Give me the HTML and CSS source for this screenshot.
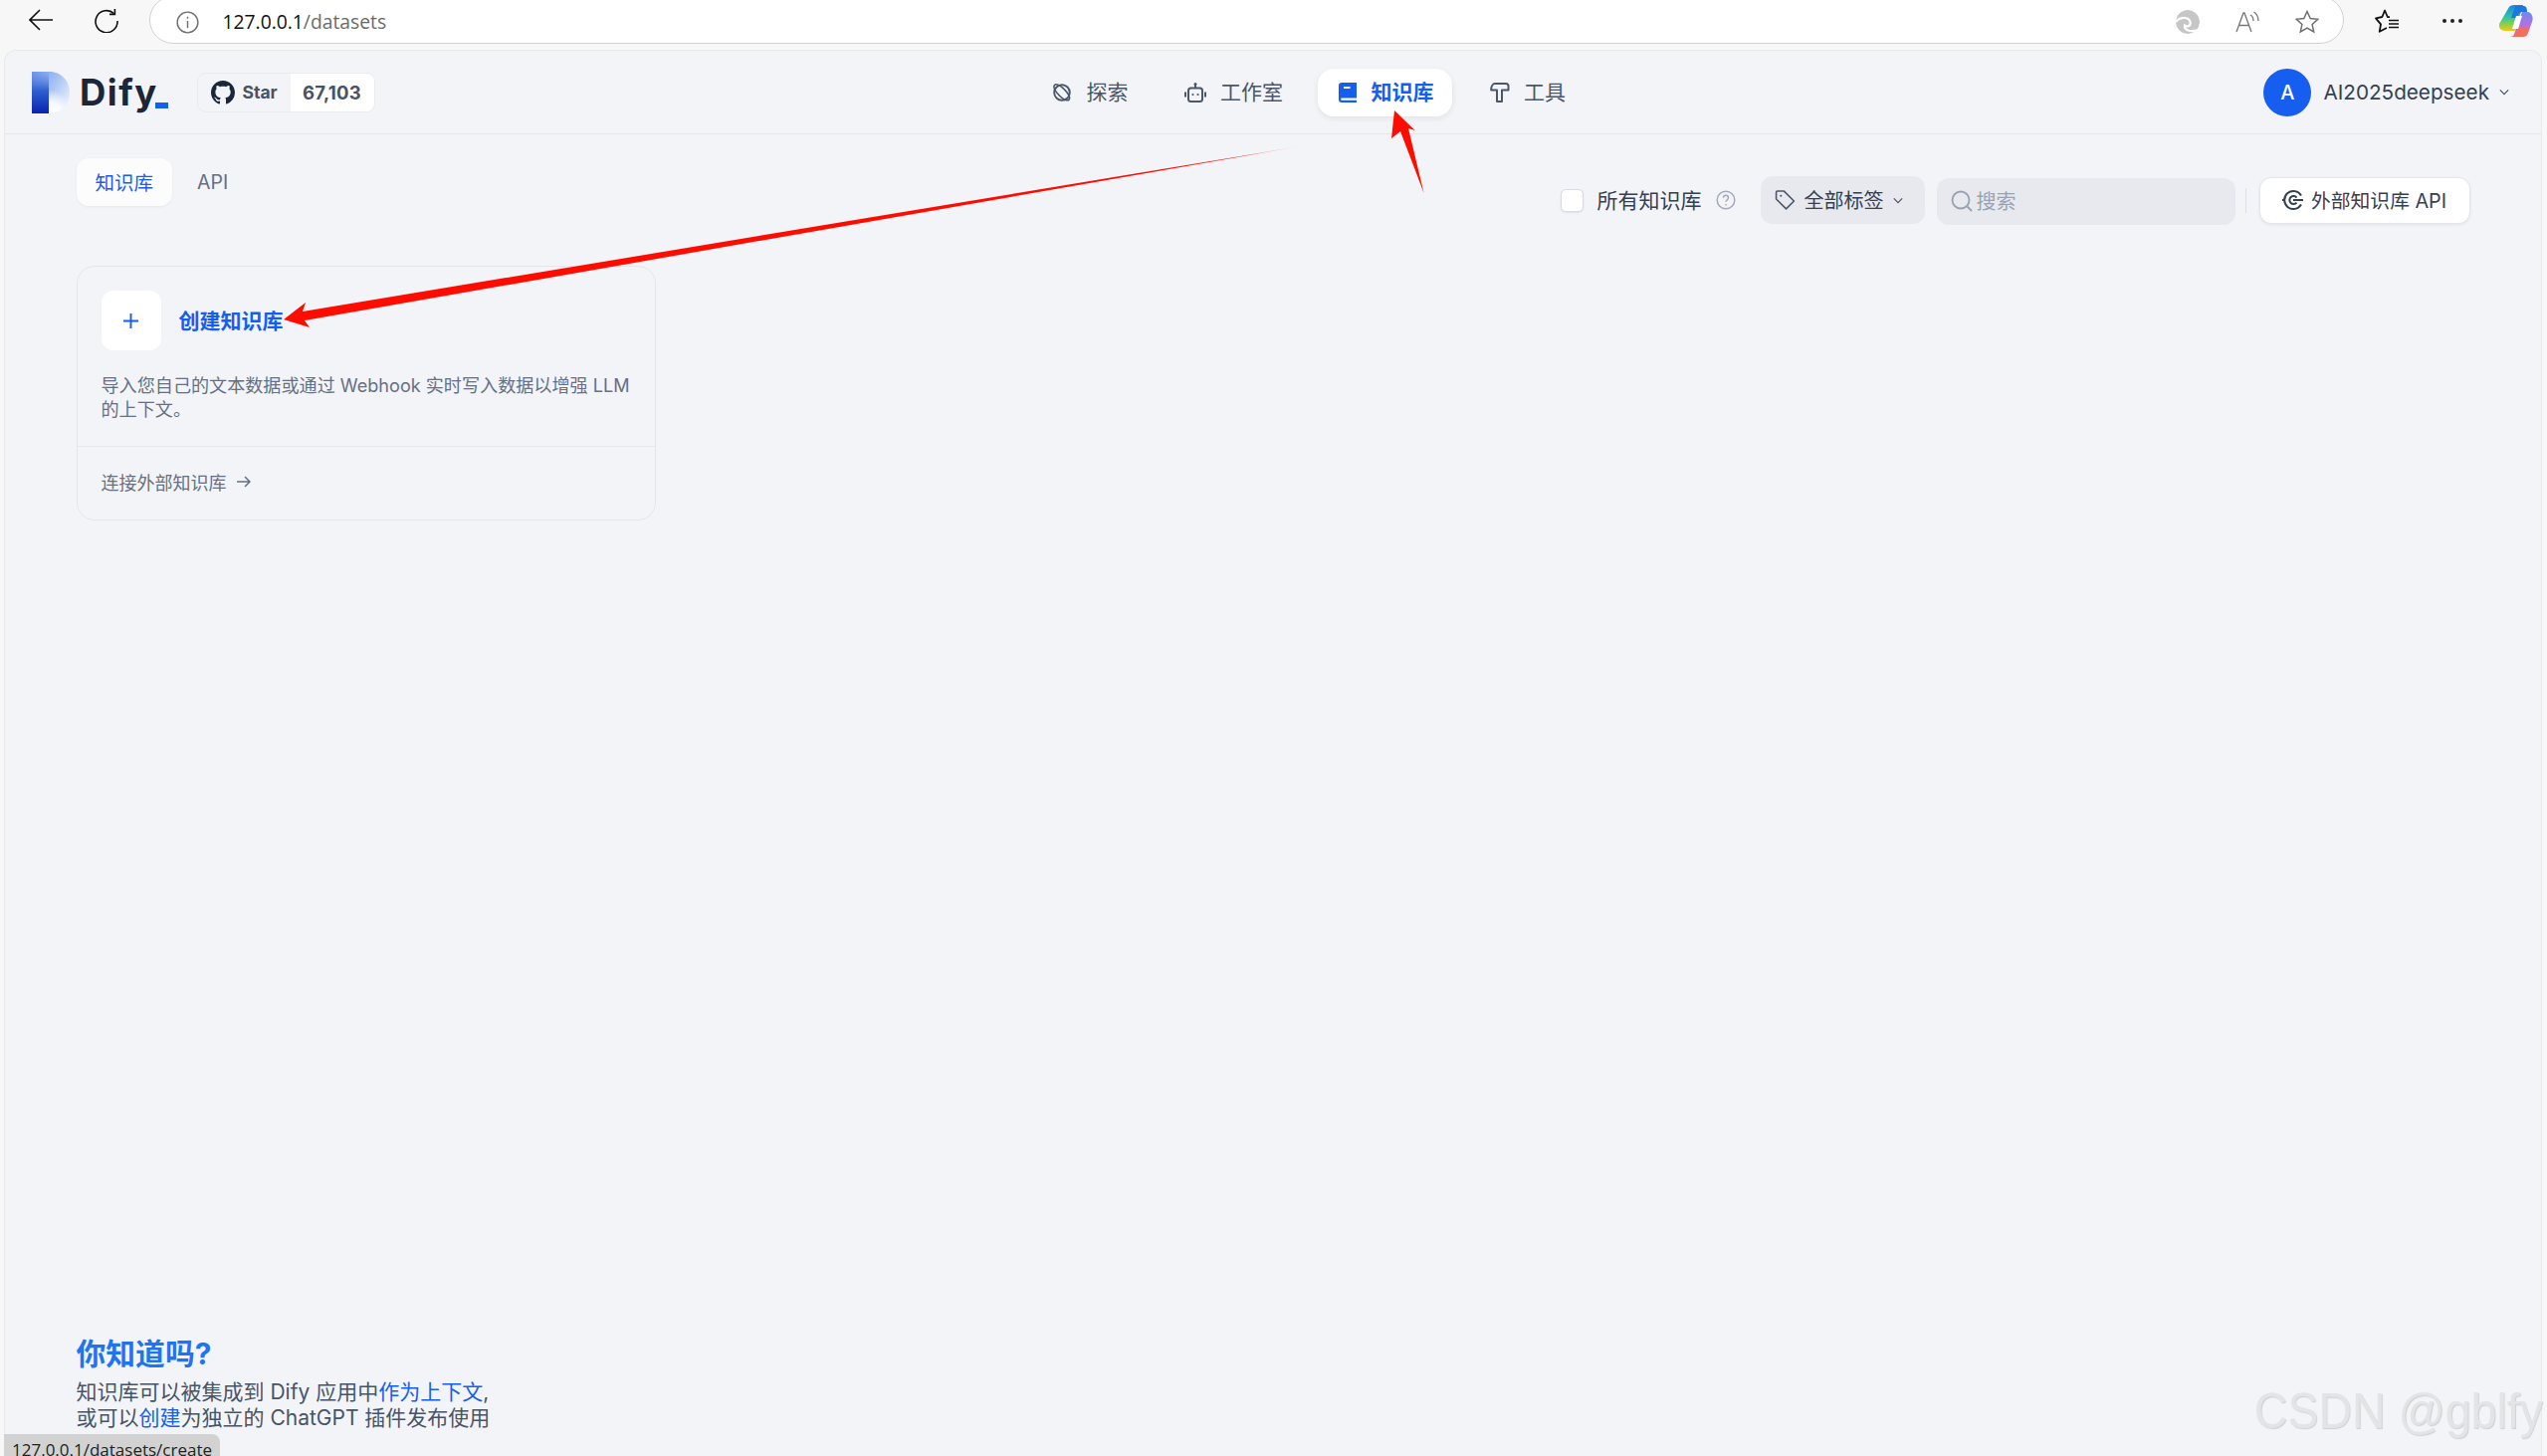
FILE: index.html
```html
<!DOCTYPE html>
<html lang="zh-CN">
<head>
<meta charset="utf-8">
<title>知识库 - Dify</title>
<link rel="stylesheet" href="styles.css">
</head>
<body>
<div class="chrome">
  <svg class="chrome-back" viewBox="0 0 24 22" fill="none" stroke="#111" stroke-width="1.6"><path d="M24 11H1M11 1 1 11l10 10"/></svg>
  <svg class="chrome-reload" viewBox="0 0 24 24" fill="none" stroke="#111" stroke-width="1.6"><path d="M19.5 4.6A11 11 0 1 0 23 12"/><path d="M20.4 0v5.4H15"/></svg>
  <div class="urlbar">
    <svg class="url-info" viewBox="0 0 24 24" fill="none" stroke="#6f6f6f" stroke-width="1.5"><circle cx="12" cy="12" r="10.8"/><path d="M12 10.5V18M12 6v2"/></svg>
    <div class="url-text"><span class="url-host">127.0.0.1</span>/datasets</div>
    <div class="url-actions">
      <svg class="ua-swirl" viewBox="0 0 24 24"><circle cx="12" cy="12" r="12" fill="#c6c6c6"/><path d="M0 12C5 6 13 7 14.500 12c1 4-3 5.500-5.500 3.500-1 4 5 8 15 4" fill="none" stroke="#fff" stroke-width="2.200"/></svg>
      <svg class="ua-read" viewBox="0 0 24 24" fill="none" stroke="#777" stroke-width="1.3"><path d="M1 22 8 3h1l7 19M3.6 15.5H14"/><path d="M15 5c2 1 3 3 3 6M18.500 2c3 2 4.500 5 4.500 9"/></svg>
      <svg class="ua-star" viewBox="0 0 24 24" fill="none" stroke="#6f6f6f" stroke-width="1.5"><path d="m12 1.500 3.200 7 7.600.8-5.700 5.100 1.600 7.500-6.700-3.800-6.700 3.800 1.600-7.500-5.700-5.100 7.600-.8z"/></svg>
    </div>
  </div>
  <svg class="chrome-fav" viewBox="0 0 24 24" fill="none" stroke="#111" stroke-width="1.8" stroke-linejoin="round"><path d="M15 8.200 12.800 8 10 1.500 7.400 8 1 9.300l5 6-1.300 7.500 7.300-3.800"/><path d="M14 11.500h10M14 15h10M14 18.500h10" stroke-width="1.500"/></svg>
  <div class="chrome-dots"><i></i><i></i><i></i></div>
  <svg class="chrome-copilot" viewBox="0 0 34 32">
    <defs>
      <linearGradient id="cpA" x1="0" y1="0" x2="0" y2="1"><stop offset="0" stop-color="#1a86e0"/><stop offset=".45" stop-color="#2fc2a8"/><stop offset=".8" stop-color="#9fd03a"/><stop offset="1" stop-color="#f7c61a"/></linearGradient>
      <linearGradient id="cpB" x1="0" y1="0" x2="0" y2="1"><stop offset="0" stop-color="#6a8cf0"/><stop offset=".6" stop-color="#c06cdc"/><stop offset="1" stop-color="#e868a8"/></linearGradient>
    </defs>
    <path d="M10 2C11 .700 13 0 15 0h9l-8 26H6c-4 0-7-3-6-7z" fill="url(#cpA)"/>
    <path d="M24 32c2 0 4-1 5-4l4-11c2-5-1-10-5-10h-5l-9 25z" fill="url(#cpB)"/>
    <path d="M11 32h12c3 0 5-2 6-5l1-4H19c-1 5-3 8-8 9z" fill="#f2705a"/>
    <path d="M16 1h9c2 0 3 2 3 6h-5c-2 0-4 2-4 4l-1 2h-6z" fill="#1c78e0"/>
    <path d="M17 11h6l-4 13h-6z" fill="#fff"/>
  </svg>
</div>

<div class="panel">
  <header class="topbar">
    <div class="brand">
      <svg class="logo-mark" viewBox="0 0 38 42">
        <defs>
          <linearGradient id="lgA" x1="0" y1="0" x2="1" y2=".7"><stop offset="0" stop-color="#6f96ec"/><stop offset=".55" stop-color="#a9c4f4"/><stop offset="1" stop-color="#e6eefb"/></linearGradient>
          <linearGradient id="lgB" x1="0" y1="0" x2="0" y2="1"><stop offset="0" stop-color="#3f6fd8" stop-opacity="0"/><stop offset=".45" stop-color="#2f5fd0"/><stop offset="1" stop-color="#0a22b0"/></linearGradient>
          <radialGradient id="lgC" gradientUnits="userSpaceOnUse" cx="17" cy="42" r="24"><stop offset="0" stop-color="#fff"/><stop offset=".5" stop-color="#fff" stop-opacity=".85"/><stop offset="1" stop-color="#fff" stop-opacity="0"/></radialGradient>
        </defs>
        <path d="M0 0h18c11 0 20 9 20 21s-9 21-20 21H0z" fill="url(#lgA)"/>
        <path d="M0 0h17v42H0z" fill="url(#lgB)"/>
        <path d="M17 18h21v3c0 12-9 21-20 21h-1z" fill="url(#lgC)"/>
      </svg>
      <div class="logo-word">Dify<span class="logo-dash"></span></div>
      <div class="star-badge">
        <div class="star-left">
          <svg class="gh-icon" viewBox="0 0 16 16"><path fill="#1c2639" d="M8 0C3.580 0 0 3.580 0 8c0 3.540 2.290 6.530 5.470 7.590.4.070.55-.17.55-.38 0-.19-.01-.82-.01-1.490-2.010.37-2.530-.49-2.690-.94-.09-.23-.48-.94-.82-1.130-.28-.15-.68-.52-.01-.53.63-.01 1.080.58 1.230.82.720 1.210 1.870.870 2.330.660.070-.520.280-.870.510-1.070-1.780-.2-3.640-.89-3.640-3.950 0-.870.310-1.590.820-2.150-.080-.2-.360-1.020.080-2.120 0 0 .670-.210 2.200.820.640-.180 1.320-.270 2-.270s1.360.090 2 .270c1.530-1.040 2.200-.820 2.200-.820.440 1.100.160 1.920.080 2.120.510.560.820 1.270.820 2.150 0 3.070-1.870 3.750-3.650 3.950.290.250.540.730.540 1.480 0 1.070-.010 1.930-.010 2.200 0 .210.150.460.550.380A8.013 8.013 0 0 0 16 8c0-4.420-3.580-8-8-8z"/></svg>
          <span class="star-label">Star</span>
        </div>
        <div class="star-count">67,103</div>
      </div>
    </div>
    <nav class="nav">
      <a class="nav-item">
        <svg class="nav-icon icon-explore" viewBox="0 0 20 20" fill="none" stroke="#4b5768" stroke-width="1.900"><circle cx="10" cy="10" r="7.800"/><path d="M2.500 2.500c1.500-1.500 4.500-.3 8 2.700s6.300 7 7 9.500c.5 2-.8 3.500-2.800 3-2.500-.6-6.200-3.200-8.700-6.200S1 4 2.500 2.500z" stroke-width="1.600"/></svg>
        <span>探索</span>
      </a>
      <a class="nav-item">
        <svg class="nav-icon icon-robot" viewBox="0 0 22 20" fill="none" stroke="#4b5768" stroke-width="2"><rect x="4" y="5.500" width="14" height="13.500" rx="2.500"/><path d="M11 1.500v4M1 9.500v5M21 9.500v5"/><circle cx="11" cy="1.500" r="1.500" fill="#4b5768" stroke="none"/><circle cx="8.500" cy="12" r="1.100" fill="#4b5768" stroke="none"/><circle cx="13.500" cy="12" r="1.100" fill="#4b5768" stroke="none"/></svg>
        <span>工作室</span>
      </a>
      <a class="nav-item nav-item-active">
        <svg class="nav-icon icon-book" viewBox="0 0 18 20"><path fill="#155eef" d="M3 0h15v15.500H3.500c-1 0-1.300.6-1.300 1.200s.3 1.100 1.300 1.100H18V20H3c-2 0-3-1.200-3-3V3c0-2 1-3 3-3z"/><rect x="5" y="4" width="6.500" height="2" fill="#fff"/></svg>
        <span>知识库</span>
      </a>
      <a class="nav-item">
        <svg class="nav-icon icon-tool" viewBox="0 0 20 20" fill="none" stroke="#4b5768" stroke-width="2" stroke-linejoin="round"><path d="M7 7.500V19h5V7.500h6.500v-4C18.500 2 17.500 1 16 1H5C3 1 1.200 3.500 1.200 7.500z"/></svg>
        <span>工具</span>
      </a>
    </nav>
    <div class="account">
      <div class="avatar">A</div>
      <span class="account-name">AI2025deepseek</span>
      <svg class="chev-sm chev-account" viewBox="0 0 12 8" fill="none" stroke="#4b5768" stroke-width="1.500"><path d="m1 1.500 5 5 5-5"/></svg>
    </div>
  </header>

  <main class="content">
    <div class="toolbar">
      <div class="tabs">
        <div class="tab tab-active">知识库</div>
        <div class="tab">API</div>
      </div>
      <div class="filters">
        <label class="all-check"><span class="checkbox"></span><span>所有知识库</span>
          <svg class="help" viewBox="0 0 20 20" fill="none" stroke="#a3abb8" stroke-width="1.500"><circle cx="10" cy="10" r="8.800"/><path d="M7.500 7.800c0-3.300 5-3.300 5 0 0 2-2.500 2-2.500 4"/><path d="M10 14v1.500"/></svg>
        </label>
        <div class="tag-select">
          <svg class="tag-icon" viewBox="0 0 20 20" fill="none" stroke="#4b5768" stroke-width="1.500" stroke-linejoin="round"><path d="M1.500 2.500c0-.6.400-1 1-1h6.500l9.500 9.500-7.500 7.500-9.500-9.500z"/><circle cx="6" cy="6" r="1" fill="#4b5768" stroke="none"/></svg>
          <span>全部标签</span>
          <svg class="chev-sm" viewBox="0 0 12 8" fill="none" stroke="#4b5768" stroke-width="1.500"><path d="m1 1.500 5 5 5-5"/></svg>
        </div>
        <div class="search">
          <svg class="search-icon" viewBox="0 0 22 22" fill="none" stroke="#98a2b2" stroke-width="1.800"><circle cx="10" cy="10" r="8.500"/><path d="m16.500 16.500 4.500 4.500"/></svg>
          <span>搜索</span>
        </div>
        <div class="vdivider"></div>
        <div class="api-button">
          <svg class="api-icon" viewBox="0 0 22 22" fill="none" stroke="#354052" stroke-width="2"><path d="M19 6.500A9 9 0 1 0 19 15.500"/><path d="M14.500 8.500a4 4 0 1 0 0 5"/><path d="M0 11h3M11 11h10"/></svg>
          <span>外部知识库 API</span>
        </div>
      </div>
    </div>

    <section class="card">
      <div class="card-top">
        <div class="card-head">
          <div class="plus-box">
            <svg class="plus-icon" viewBox="0 0 14 14" fill="none" stroke="#155eef" stroke-width="1.800"><path d="M7 0v14M0 7h14"/></svg>
          </div>
          <div class="card-title">创建知识库</div>
        </div>
        <p class="card-desc">导入您自己的文本数据或通过 Webhook 实时写入数据以增强 LLM 的上下文。</p>
      </div>
      <div class="card-foot">
        <span>连接外部知识库</span>
        <svg class="arrow-right" viewBox="0 0 14 12" fill="none" stroke="#676f83" stroke-width="1.500"><path d="M0 6h13M8 1l5 5-5 5"/></svg>
      </div>
    </section>

    <section class="tip">
      <h2 class="tip-title">你知道吗?</h2>
      <p class="tip-text">知识库可以被集成到 Dify 应用中<a class="tip-link">作为上下文</a>,<br>或可以<a class="tip-link">创建</a>为独立的 ChatGPT 插件发布使用</p>
    </section>
  </main>
</div>

<svg class="annotations" viewBox="0 0 2559 1463">
  <defs>
    <linearGradient id="fade" gradientUnits="userSpaceOnUse" x1="1306" y1="147" x2="1180" y2="170"><stop offset="0" stop-color="#ff0c00" stop-opacity=".3"/><stop offset=".4" stop-color="#ff0c00" stop-opacity=".85"/><stop offset="1" stop-color="#ff0c00"/></linearGradient>
  </defs>
  <polygon points="285,321 307,304 304,313 1306,147 306,322 311,329" fill="url(#fade)"/>
  <polygon points="1401,111 1421.600,131 1415,129 1430.600,194 1407,132 1398,139" fill="#ff0c00"/>
</svg>
<div class="watermark">CSDN @gblfy</div>
<div class="status">127.0.0.1/datasets/create</div>
</body>
</html>
```

FILE: styles.css
```css
* { box-sizing: border-box; }
html, body { height: 100%; }
body {
  margin: 0;
  background: #f7f7f7;
  display: flex;
  flex-direction: column;
  font-family: Inter, "Noto Sans CJK SC", sans-serif;
  font-weight: 400;
  color: #354052;
  overflow: hidden;
}
.chrome { height: 50px; display: flex; align-items: flex-start; flex: none; }
.chrome-back { width: 24px; height: 22px; margin: 9px 0 0 29px; flex: none; }
.chrome-reload { width: 24px; height: 24px; margin: 9px 0 0 42px; flex: none; }
.urlbar {
  width: 2205px;
  height: 48px;
  margin: -4px 0 0 31px;
  padding: 0 24px 0 25.500px;
  background: #fff;
  border: 1.500px solid #d2d2d2;
  border-radius: 26px;
  display: flex;
  align-items: center;
  flex: none;
}
.url-info { width: 23px; height: 23px; margin-top: 4px; }
.url-text { margin: 2px 0 0 24px; font: 400 19.300px "Open Sans", sans-serif; color: #6b6b6b; }
.url-host { color: #111; }
.url-actions { margin-left: auto; margin-top: 4px; display: flex; align-items: center; gap: 36px; padding-right: 0; }
.ua-swirl, .ua-read, .ua-star { width: 24px; height: 24px; display: block; }
.ua-swirl { border-radius: 50%; }
.chrome-fav { width: 24px; height: 24px; margin: 9px 0 0 30.500px; flex: none; }
.chrome-dots { display: flex; gap: 4px; margin: 19px 0 0 44px; flex: none; }
.chrome-dots i { width: 4px; height: 4px; border-radius: 50%; background: #222; display: block; }
.chrome-copilot { width: 34px; height: 32px; margin: 5px 0 0 37px; flex: none; }

.panel {
  flex: 1;
  margin: 0 5px 0 4px;
  min-height: 0;
  background: #f2f4f8;
  border: 1px solid #e9e9e9;
  border-bottom: 0;
  border-radius: 12px 12px 0 0;
  display: flex;
  flex-direction: column;
}
.topbar {
  height: 84px;
  flex: none;
  display: flex;
  align-items: center;
  border-bottom: 1.500px solid #e4e6ea;
  padding-left: 27px;
  padding-right: 32px;
}
.brand { display: flex; align-items: center; flex: none; }
.logo-mark { width: 38px; height: 42px; display: block; }
.logo-word { position: relative; margin-left: 10px; font-size: 36.500px; font-weight: 700; letter-spacing: 1.500px; color: #1c2639; line-height: 42px; width: 117.500px; }
.logo-dash { position: absolute; left: 76px; top: 31px; width: 13px; height: 6px; background: #155eef; }
.star-badge {
  display: flex;
  height: 40px;
  width: 179px;
  border: 1px solid #e9ebf0;
  border-radius: 9px;
  overflow: hidden;
  font-size: 17.500px;
  font-weight: 700;
  color: #475467;
}
.star-left { width: 93px; display: flex; align-items: center; padding-left: 13px; gap: 8px; }
.gh-icon { width: 24px; height: 24px; }
.star-count { flex: 1; background: #fff; display: flex; align-items: center; justify-content: center; font-size: 18.500px; letter-spacing: .3px; }
.nav { margin-left: 659.500px; display: flex; gap: 17px; }
.nav-item {
  height: 48px;
  padding: 0 18px 0 21px;
  display: flex;
  align-items: center;
  gap: 14.500px;
  border-radius: 16px;
  font-size: 21px;
  color: #4b5768;
}
.nav-item span { margin-top: -3px; }
.nav-item-active { background: #fff; color: #155eef; font-weight: 600; box-shadow: 0 2px 6px rgba(16,24,40,.08); }
.nav-icon { height: 20px; flex: none; }
.icon-explore { width: 20px; }
.icon-robot { width: 22px; }
.icon-book { width: 18px; }
.icon-tool { width: 20px; }
.account { margin-left: auto; display: flex; align-items: center; color: #354052; font-size: 20.700px; }
.avatar {
  width: 48px;
  height: 48px;
  border-radius: 50%;
  background: #155eef;
  color: #fff;
  display: flex;
  align-items: center;
  justify-content: center;
  font-size: 20px;
  font-weight: 500;
}
.account-name { margin-left: 12px; }
.chev-sm { width: 10px; height: 7px; margin-left: 9px; flex: none; }
.chev-account { margin-left: 10px; }

.content { flex: 1; min-height: 0; padding: 24px 71px 0 71.500px; display: flex; flex-direction: column; }
.toolbar { display: flex; justify-content: space-between; align-items: flex-start; height: 108px; flex: none; }
.tabs { display: flex; gap: 6px; }
.tab { height: 48px; padding: 0 19px; display: flex; align-items: center; font-size: 19.500px; color: #676f83; border-radius: 12px; }
.tab-active { background: #fcfcfd; color: #155eef; box-shadow: 0 1px 3px rgba(16,24,40,.05); padding-bottom: 2px; }
.filters { display: flex; align-items: center; height: 48px; margin-top: 18px; }
.all-check { display: flex; align-items: center; font-size: 21px; color: #354052; margin-right: 25px; }
.all-check span:nth-child(2), .tag-select span, .search span, .api-button span { margin-top: -2px; }
.checkbox { width: 23px; height: 23px; background: #fff; border: 1px solid #d8dbe2; border-radius: 5px; margin-right: 13.500px; box-shadow: 0 1px 2px rgba(16,24,40,.08); }
.help { width: 20px; height: 20px; margin-left: 14px; }
.tag-select { width: 165px; height: 48px; background: #e7e9ee; border-radius: 12px; display: flex; align-items: center; padding-left: 14.500px; font-size: 20px; color: #354052; }
.tag-icon { width: 21px; height: 22px; margin-right: 8.500px; }
.search { width: 300px; height: 47px; margin: 2px 0 0 12px; background: #e7e9ee; border-radius: 12px; display: flex; align-items: center; padding-left: 14px; font-size: 20px; color: #98a2b2; }
.search-icon { width: 22px; height: 22px; margin-right: 4px; }
.vdivider { width: 1px; height: 25px; background: #dcdfe5; margin: 0 13px 0 10.500px; }
.api-button { width: 212px; height: 47px; background: #fff; border: 1px solid #e4e6ea; border-radius: 12px; box-shadow: 0 1px 3px rgba(16,24,40,.08); display: flex; align-items: center; padding-left: 22px; gap: 7px; font-size: 19.800px; color: #354052; }
.api-icon { width: 22px; height: 22px; }

.card { width: 582px; height: 255.500px; flex: none; border: 1.500px solid #e4e6eb; border-radius: 18px; display: flex; flex-direction: column; }
.card-top { height: 181px; padding: 24px 24px 0; border-bottom: 1px solid #e6e8ed; flex: none; }
.card-head { display: flex; align-items: center; }
.plus-box { width: 60px; height: 60px; background: #fff; border-radius: 12px; display: flex; align-items: center; justify-content: center; }
.plus-icon { width: 15px; height: 15px; }
.card-title { margin-left: 18px; margin-top: -3px; font-size: 21px; font-weight: 600; color: #155eef; }
.card-desc { margin: 23px 0 0; font-size: 18.100px; line-height: 24px; color: #676f83; }
.card-foot { flex: 1; padding: 0 24px 2px; display: flex; align-items: center; font-size: 18px; color: #676f83; gap: 10px; }
.arrow-right { width: 14px; height: 12px; }

.tip { margin-top: auto; padding-bottom: 26px; flex: none; }
.tip-title { margin: 0; font-size: 29.800px; line-height: 36px; font-weight: 700; color: #1f74f0; }
.tip-text { margin: 8px 0 0; font-size: 21px; line-height: 25.500px; color: #475467; }
.tip-link { color: #155eef; }

.annotations { position: absolute; left: 0; top: 0; width: 2559px; height: 1463px; pointer-events: none; }
.watermark {
  position: absolute;
  right: 4px;
  bottom: 16px;
  font: 400 50px "Liberation Sans", sans-serif;
  color: #e4e4e6;
  text-shadow: 1px 1px 1px #cfcfd2;
  transform: scaleX(.93);
  transform-origin: right center;
}
.status {
  position: absolute;
  left: 4px;
  bottom: 0;
  width: 217px;
  height: 22px;
  padding: 4px 0 0 8px;
  background: #d2d2d2;
  border-top-right-radius: 8px;
  font: 400 17px/24px "Open Sans", sans-serif;
  color: #222;
  overflow: hidden;
}
```
